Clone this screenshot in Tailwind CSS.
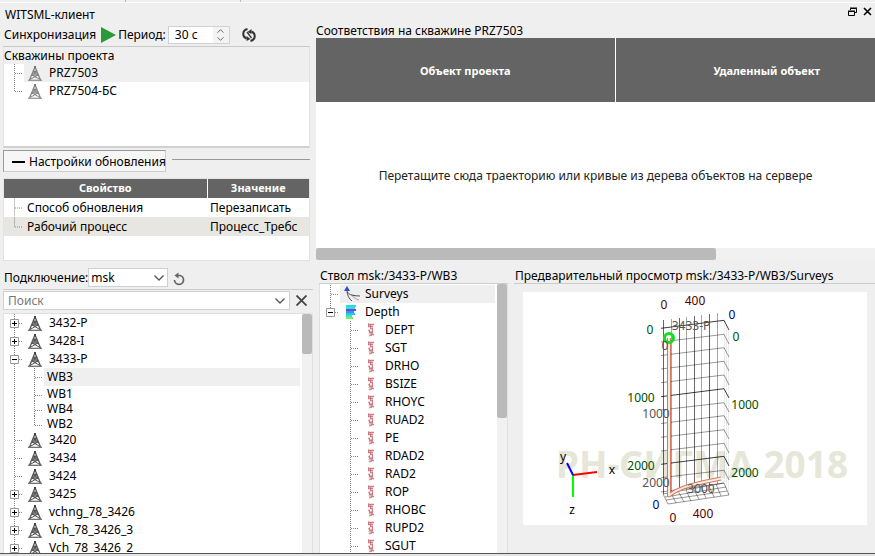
<!DOCTYPE html>
<html lang="ru">
<head>
  <meta charset="UTF-8" />
  <meta name="viewport" content="width=device-width, initial-scale=1.0"/>
  <title>WITSML-клиент</title>
  <script src="https://cdn.jsdelivr.net/npm/@tailwindcss/browser@4"></script>
</head>
<body class="h-screen flex flex-col overflow-hidden bg-[#efefef] text-black text-xs font-['Noto_Sans','Open_Sans',sans-serif]">

  <!-- Shared icons -->
  <svg class="hidden">
    <symbol id="well" viewBox="0 0 14 15">
      <path d="M6 0h2v3H6z" fill="#444"/>
      <path d="M5.500 4h3l2 6h-7z" fill="#aaa"/>
      <path d="M6.500 2L1.500 14M7.500 2L12.500 14" stroke="#555" stroke-width="1.300" fill="none"/>
      <path d="M5 5.500h4M4 9h6M5 5.500L10 9M9 5.500L4 9M4 9l8 4.500M10 9l-8 4.500" stroke="#555" fill="none"/>
      <path d="M0 14.300h14" stroke="#666" stroke-width="1.200"/>
    </symbol>
    <symbol id="curve" viewBox="0 0 8 14">
      <path d="M1 1.500h6M1 3.500h5M3 5.500h3M5.500 6v3M2 6.500l1 2.500M2 9.500h4M4 11.500h3M2 13l3-1" stroke="#cf7f86" stroke-width="1.300" fill="none"/>
      <path d="M1.500 .5v3M3.500 2v4M1.500 7.500l2 3M5 8v4M2 10.500l2 2" stroke="#c9727b" stroke-width=".9" fill="none"/>
    </symbol>
    <symbol id="surveys" viewBox="0 0 16 16">
      <path d="M3 4c0 5 2 9 5 11" stroke="#456" fill="none"/>
      <path d="M3 6c2 3 8 4 13 4" stroke="#34506e" stroke-width="1.200" fill="none"/>
      <path d="M4 7c3 1 6 6 11 7" stroke="#d08a90" fill="none"/>
      <path d="M3 0l3 5H0z" fill="#2450c8"/>
    </symbol>
    <symbol id="depth" viewBox="0 0 12 14">
      <path d="M1 0h10v2H1z" fill="#2fd8e8"/>
      <path d="M1 2h9v2H1z" fill="#35e8b0"/>
      <path d="M1 4h10v2H1z" fill="#5a50f0"/>
      <path d="M1 6h8v2H1z" fill="#4a8af0"/>
      <path d="M1 8h9v2H1z" fill="#25c8f5"/>
      <path d="M1 10h6v2H1z" fill="#30e8d0"/>
      <path d="M1 12h7v2H1z" fill="#7df050"/>
    </symbol>
    <symbol id="chevron" viewBox="0 0 10 6">
      <path d="M.5 .5L5 5L9.500 .5" fill="none" stroke="#555" stroke-width="1.300"/>
    </symbol>

    <!-- Tree branches -->
    <symbol id="tee" viewBox="0 0 20 18">
      <path d="M10.500 0v18M11 9.500h8" stroke="#888" stroke-dasharray="1 1"/>
    </symbol>
    <symbol id="end" viewBox="0 0 20 18">
      <path d="M10.500 0v10M11 9.500h8" stroke="#888" stroke-dasharray="1 1"/>
    </symbol>
    <symbol id="pass" viewBox="0 0 20 18">
      <path d="M10.500 0v18" stroke="#888" stroke-dasharray="1 1"/>
    </symbol>
    <symbol id="box" viewBox="0 0 20 18">
      <path d="M15 9.500h4" stroke="#888" stroke-dasharray="1 1"/>
      <path d="M6.500 5.500h8v8h-8z" fill="#fff" stroke="#999"/>
    </symbol>
    <symbol id="plus" viewBox="0 0 20 18">
      <path d="M10.500 0v18" stroke="#888" stroke-dasharray="1 1"/>
      <use href="#box"/>
      <path d="M8 9.500h5M10.500 7v5" stroke="#000"/>
    </symbol>
    <symbol id="minus" viewBox="0 0 20 18">
      <path d="M10.500 0v18" stroke="#888" stroke-dasharray="1 1"/>
      <use href="#box"/>
      <path d="M8 9.500h5" stroke="#000"/>
    </symbol>
    <symbol id="minus-end" viewBox="0 0 20 18">
      <path d="M10.500 0v6" stroke="#888" stroke-dasharray="1 1"/>
      <use href="#box"/>
      <path d="M8 9.500h5" stroke="#000"/>
    </symbol>
  </svg>

  <!-- Tab strip edge -->
  <div class="flex h-[3px] shrink-0 border-b border-white">
    <div class="w-[126px] border-r border-[#bbb]"></div>
    <div class="w-[115px] border-r border-[#bbb]"></div>
  </div>

  <!-- Title bar -->
  <header class="flex h-[21px] shrink-0 items-center pl-[5px] pr-[3px]">
    <h1 class="flex-1 pt-0.5">WITSML-клиент</h1>
    <button aria-label="Открепить" class="mr-1.5 mb-1">
      <svg class="block size-[9px]" viewBox="0 0 9 9"><path d="M2.500 3V1.500h6v4H7M2 1h7M.5 4.500h6v4h-6zM0 4h7" fill="none" stroke="#000"/></svg>
    </button>
    <button aria-label="Закрыть" class="mb-1">
      <svg class="block size-[9px]" viewBox="0 0 9 9"><path d="M1 1l7 7M8 1L1 8" stroke="#000" stroke-width="1.600"/></svg>
    </button>
  </header>

  <!-- Upper half -->
  <div class="flex h-[238px] shrink-0 gap-1.5 pl-[3px]">

    <section class="flex w-[307px] shrink-0 flex-col">
      <div class="flex h-[22px] shrink-0 items-center pl-px">
        <span>Синхронизация</span>
        <button aria-label="Запустить" class="ml-1">
          <svg class="block h-4 w-4" viewBox="0 0 16 16"><path d="M1 0l15 8L1 16z" fill="#2a9a36"/></svg>
        </button>
        <label for="period" class="ml-0.5">Период:</label>
        <div class="ml-0.5 flex h-[18px] w-[62px] border border-[#cdd3d3] bg-white">
          <input id="period" type="text" value="30 с" class="min-w-0 flex-1 pl-1.5 outline-none">
          <div class="flex w-4 flex-col bg-[#f3f3f3]">
            <button aria-label="Больше" class="flex flex-1 items-center justify-center"><svg class="h-1 w-[7px] rotate-180"><use href="#chevron"/></svg></button>
            <button aria-label="Меньше" class="flex flex-1 items-center justify-center"><svg class="h-1 w-[7px]"><use href="#chevron"/></svg></button>
          </div>
        </div>
        <button aria-label="Обновить" class="ml-3">
          <svg class="block size-[14px]" viewBox="0 0 14 14">
            <path d="M5.500 1C0 2.500 0 8.500 4.500 10.500M8.500 13c5.500-1.500 5.500-7.500 1-9.500" fill="none" stroke="#333" stroke-width="2"/>
            <path d="M4.500 8v5l4-2zM9.500 1v5l-4-2z" fill="#333"/>
            <path d="M5 4l4.500 6" stroke="#333" stroke-width="1.300"/>
          </svg>
        </button>
      </div>

      <!-- Project wells -->
      <div class="flex h-[102px] flex-col border border-t-[#c8c8c8] border-x-[#e2e2e2] border-b-2 border-b-[#d0d0d0] bg-white">
        <h2 class="flex h-[17px] shrink-0 items-center bg-[#efefef]">Скважины проекта</h2>
        <ul>
          <li class="flex h-[18px]">
            <svg class="h-[18px] w-5"><use href="#tee"/></svg>
            <div class="flex flex-1 items-center gap-[7px] bg-[#efefef] pl-1"><svg class="h-[15px] w-3.5 opacity-70"><use href="#well"/></svg>PRZ7503</div>
          </li>
          <li class="flex h-[18px]">
            <svg class="h-[18px] w-5"><use href="#end"/></svg>
            <div class="flex flex-1 items-center gap-[7px] pl-1"><svg class="h-[15px] w-3.5 opacity-70"><use href="#well"/></svg>PRZ7504-БС</div>
          </li>
        </ul>
      </div>

      <div class="mt-[2px] flex items-start gap-1.5">
        <button class="flex h-[22px] w-[163px] items-center gap-1 whitespace-nowrap border border-t-[#999] border-l-[#999] border-r-[#ccc] border-b-[#ccc] bg-[#f6f6f6] pl-2 pt-0.5">
          <span class="h-0.5 w-[13px] shrink-0 bg-black"></span>Настройки обновления
        </button>
        <div class="mt-[9px] flex-1 border-t border-[#999]"></div>
      </div>

      <!-- Update settings -->
      <div class="mt-1.5 h-[83px] border border-[#e2e2e2] bg-white">
        <table class="w-full table-fixed">
          <thead>
            <tr class="h-[19px] bg-[#646464] text-[11px] text-white">
              <th class="w-[203px] border-r border-white p-0">Свойство</th>
              <th class="p-0">Значение</th>
            </tr>
          </thead>
          <tbody>
            <tr class="h-[19px]">
              <td class="p-0"><div class="flex items-center gap-[3px]"><svg class="h-[19px] w-5"><use href="#tee"/></svg>Способ обновления</div></td>
              <td class="p-0 pl-[3px]">Перезаписать</td>
            </tr>
            <tr class="h-[19px] bg-[#e8e6e1]">
              <td class="p-0"><div class="flex items-center gap-[3px]"><svg class="h-[19px] w-5"><use href="#end"/></svg>Рабочий процесс</div></td>
              <td class="p-0 pl-[3px]">Процесс_Требс</td>
            </tr>
          </tbody>
        </table>
      </div>
    </section>

    <!-- Matches -->
    <section class="flex min-w-0 flex-1 flex-col">
      <h2 class="flex h-3.5 items-center">Соответствия на скважине PRZ7503</h2>
      <div class="flex flex-1 flex-col overflow-hidden bg-white">
        <table class="w-[602px] table-fixed">
          <thead>
            <tr class="h-16 bg-[#646464] text-[11px] text-white">
              <th class="w-[299px] border-r border-white pt-0.5">Объект проекта</th>
              <th class="pt-0.5">Удаленный объект</th>
            </tr>
          </thead>
        </table>
        <p class="flex flex-1 items-center justify-center pt-0.5 text-[#222]">Перетащите сюда траекторию или кривые из дерева объектов на сервере</p>
      </div>
      <div class="mb-0.5 h-3 bg-[#f1f1f1]"><div class="h-3 w-[400px] rounded-xs bg-[#bababa]"></div></div>
    </section>
  </div>

  <!-- Lower half -->
  <div class="flex min-h-0 flex-1 gap-1.5 pl-[3px] pt-1.5">

    <section class="flex w-[310px] shrink-0 flex-col">
      <div class="flex h-[22px] shrink-0 items-start border-b border-[#ccc] pl-px">
        <label for="server" class="h-5 leading-5">Подключение:</label>
        <div class="relative">
          <select id="server" class="h-[19px] w-20 appearance-none border border-[#cdd3d3] bg-white pl-0.5 outline-none">
            <option>msk</option>
          </select>
          <svg class="pointer-events-none absolute top-[7px] right-1 h-1.5 w-2.5"><use href="#chevron"/></svg>
        </div>
        <button aria-label="Переподключить" class="ml-1 mt-1">
          <svg class="block size-3.5" viewBox="0 0 14 14">
            <path d="M5 3.500h3a4.500 4.500 0 1 1-5.500 4.500" fill="none" stroke="#666" stroke-width="1.700"/>
            <path d="M2.500 3.500L6.500 .5v6z" fill="#666"/>
          </svg>
        </button>
      </div>

      <div class="mt-px flex shrink-0 items-center">
        <div class="flex h-[19px] w-[287px] items-center border border-[#cdd3d3] bg-white pr-1">
          <input type="text" aria-label="Поиск" placeholder="Поиск" class="min-w-0 flex-1 pl-1 outline-none placeholder:text-[#777]">
          <button aria-label="История поиска"><svg class="block h-1.5 w-2.5"><use href="#chevron"/></svg></button>
        </div>
        <button aria-label="Очистить" class="ml-1.5">
          <svg class="block size-[11px]" viewBox="0 0 11 11"><path d="M.5 .5l10 10M10.500 .5l-10 10" stroke="#444" stroke-width="1.800"/></svg>
        </button>
      </div>

      <!-- Server wells -->
      <div class="mt-[3px] flex min-h-0 flex-1 border border-b-0 border-[#e0e0e0] bg-white">
        <ul id="wells" class="min-w-0 flex-1 overflow-hidden pr-0.5"></ul>
        <div class="w-2.5 bg-[#f1f1f1]"><div class="h-10 rounded-xs bg-[#bababa]"></div></div>
      </div>
    </section>

    <section class="flex w-[189px] shrink-0 flex-col">
      <h2 class="flex h-4 shrink-0 items-center border-b border-[#ccc] pl-px">Ствол msk:/3433-P/WB3</h2>
      <div class="flex min-h-0 flex-1 border-x border-[#e0e0e0] bg-white">
        <ul id="logs" class="min-w-0 flex-1 overflow-hidden pr-0.5 pt-px">
          <li class="flex h-[18px]">
            <svg class="h-[18px] w-5"><use href="#tee"/></svg>
            <div class="flex flex-1 items-center gap-[5px] bg-[#efefef] pl-1"><svg class="size-4"><use href="#surveys"/></svg>Surveys</div>
          </li>
          <li class="flex h-[18px]">
            <svg class="h-[18px] w-5"><use href="#minus-end"/></svg>
            <div class="flex flex-1 items-center gap-2 pl-[5px]"><svg class="h-3.5 w-3"><use href="#depth"/></svg>Depth</div>
          </li>
        </ul>
        <div class="w-2.5 bg-[#f1f1f1]"><div class="h-[134px] rounded-xs bg-[#bababa]"></div></div>
      </div>
    </section>

    <!-- Trajectory preview -->
    <section class="flex min-w-0 flex-1 flex-col">
      <h2 class="flex h-4 shrink-0 items-center border-b border-[#ccc] pl-px">Предварительный просмотр msk:/3433-P/WB3/Surveys</h2>
      <div class="ml-[9px] mr-2 mt-2 bg-white">
        <svg class="block w-full" viewBox="0 0 344 233" text-anchor="middle" font-size="12">
          <text x="179" y="186" font-size="37" font-weight="bold" fill="#e6e6d9">РН-СИГМА 2018</text>

          <!-- back wall -->
          <g stroke="#000" fill="none">
            <path d="M140.500 28v174M156.500 26v173M171.500 24v172M186.500 22v172" stroke-opacity=".6"/>
            <path d="M148.500 27v174M163.500 25v173M178.500 23v172M194.500 21v171" stroke-opacity=".35"/>
            <path d="M138 36.300L201 28.300L206 38M138 104.700L201 96.700L206 106M138 172.300L201 164.300L206 174" stroke-opacity=".75"/>
            <path d="M138 50L201 42.300L206 52M138 63.500L201 55.700L206 65M138 77L201 69.300L206 79M138 90.700L201 83L206 93M138 118L201 110.700L206 120M138 131.500L201 123.700L206 133M138 145.300L201 137.700L206 147M138 159L201 151.300L206 161M138 185.700L201 178.300L206 188M138 200L201 191" stroke-opacity=".4"/>
            <path d="M201.500 28v163M203.500 33v165M205.500 38v165" stroke-opacity=".07"/>
          </g>
          <!-- floor -->
          <path d="M140 202L145 212M148 201L153 211M155 199L161 210M163 198L168 209M170 196L176 207M178 195L183 206M186 194L191 205M193 192L198 204M201 191L206 203M140 202L201 191M142 205L203 195M143 208L204 199M145 212L206 203" stroke="#000" stroke-opacity=".4" fill="none"/>

          <!-- wellbore -->
          <g fill="none" stroke-linejoin="round">
            <path d="M146 46V203.500C158 194 172 192 198 186.500" stroke="#cf7a5c" stroke-width="4"/>
            <path d="M146 46V203.500C158 194 172 192 198 186.500" stroke="#fcebe0" stroke-width="2"/>
            <circle cx="146" cy="46" r="4.500" stroke="#10e020" stroke-width="3"/>
          </g>

          <g fill="#555">
            <text x="168" y="38">3433-P</text>
            <text x="142" y="58">0</text>
            <text x="133" y="126">1000</text>
            <text x="133" y="195">2000</text>
            <text x="178" y="201">3000</text>
          </g>
          <g fill="#500">
            <text x="141" y="17">0</text>
            <text x="172" y="13">400</text>
            <text x="150" y="230">0</text>
            <text x="180" y="226">400</text>
          </g>
          <g fill="#005000">
            <text x="127" y="42">0</text>
            <text x="213" y="49">0</text>
            <text x="118" y="110">1000</text>
            <text x="222" y="117">1000</text>
            <text x="118" y="178">2000</text>
            <text x="222" y="185">2000</text>
          </g>
          <g fill="#00008b">
            <text x="209" y="27">0</text>
            <text x="133" y="217">0</text>
          </g>

          <!-- axes -->
          <g stroke-width="2">
            <path d="M50 183V205" stroke="#0f0"/>
            <path d="M50 183L74 180" stroke="#f00"/>
            <path d="M50 183L44 171" stroke="#00f"/>
          </g>
          <text x="40" y="169">y</text>
          <text x="89" y="182">x</text>
          <text x="49" y="222">z</text>
        </svg>
      </div>
    </section>
  </div>

  <footer class="h-[3px] shrink-0 border-t border-[#555] bg-[#e4e4e4]"></footer>

  <script>
    const wells = [
      ['plus', '3432-P'], ['plus', '3428-I'],
      ['minus', '3433-P', ['WB3', 'WB1', 'WB4', 'WB2']],
      ['tee', '3420'], ['tee', '3434'], ['tee', '3424'],
      ['plus', '3425'], ['plus', 'vchng_78_3426'], ['plus', 'Vch_78_3426_3'], ['plus', 'Vch_78_3426_2'],
    ];
    const curves = ['DEPT', 'SGT', 'DRHO', 'BSIZE', 'RHOYC', 'RUAD2', 'PE', 'RDAD2', 'RAD2', 'ROP', 'RHOBC', 'RUPD2', 'SGUT'];

    // svg height is clipped by the row, so the dotted trunk stays continuous in short rows
    const boreRow = (name, i, all) => `
      <li class="flex overflow-hidden ${i === 0 ? 'h-[18px]' : 'h-[15px]'}">
        <svg class="h-[18px] w-5"><use href="#pass"/></svg>
        <svg class="h-[18px] w-5"><use href="#${i === all.length - 1 ? 'end' : 'tee'}"/></svg>
        <div class="flex flex-1 items-center pl-[3px] ${i === 0 ? 'bg-[#efefef]' : ''}">${name}</div>
      </li>`;

    document.getElementById('wells').innerHTML = wells.map(([branch, name, bores = []]) => `
      <li>
        <div class="flex h-[18px]">
          <svg class="h-[18px] w-5"><use href="#${branch}"/></svg>
          <div class="flex flex-1 items-center gap-[7px] pl-1"><svg class="h-[15px] w-3.5"><use href="#well"/></svg>${name}</div>
        </div>
        <ul>${bores.map(boreRow).join('')}</ul>
      </li>`).join('');

    document.getElementById('logs').insertAdjacentHTML('beforeend', curves.map(name => `
      <li class="flex h-[18px] items-center pl-5">
        <svg class="h-[18px] w-5"><use href="#tee"/></svg>
        <svg class="ml-[7px] mr-2.5 h-3.5 w-2"><use href="#curve"/></svg>${name}
      </li>`).join(''));
  </script>
</body>
</html>
